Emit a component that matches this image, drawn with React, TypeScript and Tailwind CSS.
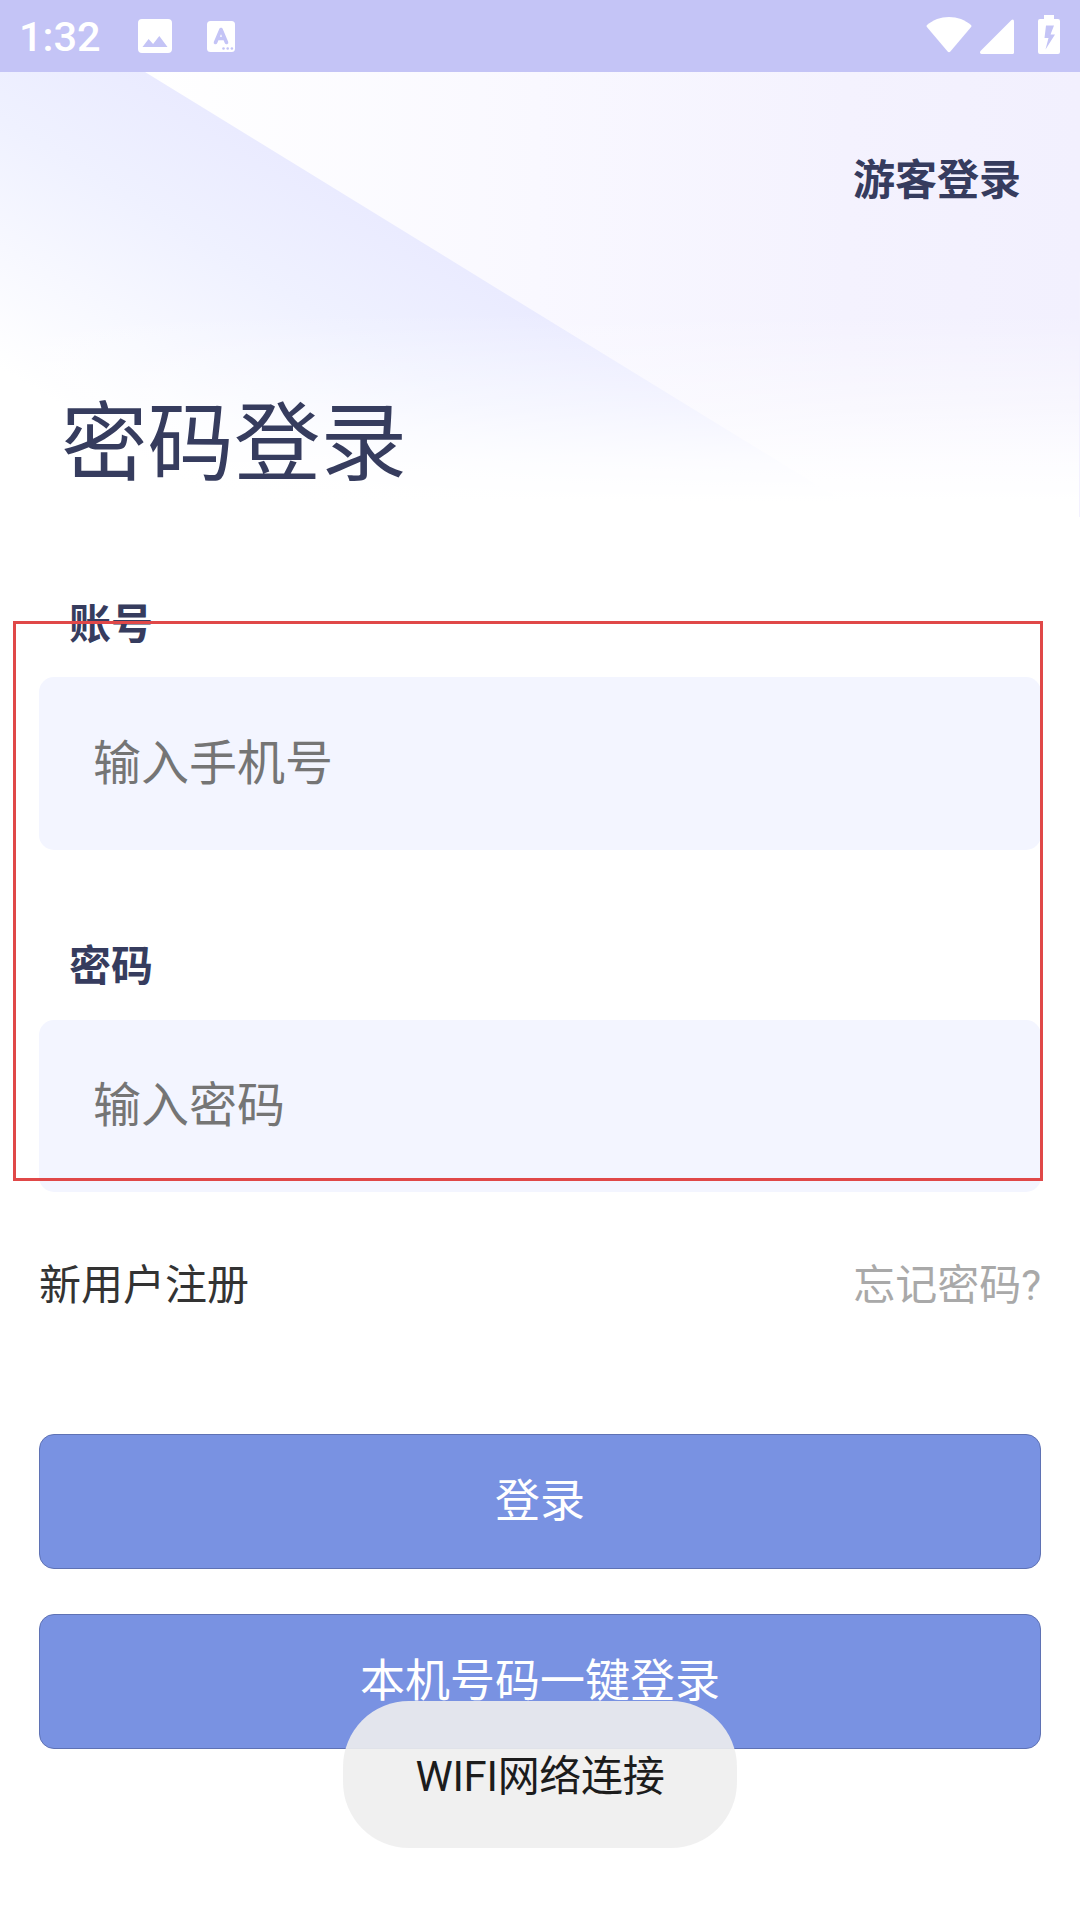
import React from 'react';

interface FieldProps {
  label: string;
  placeholder: string;
  type: string;
  className: string;
  inputClassName: string;
}

function StatusBar() {
  return (
    <div className="relative flex h-[72px] justify-between bg-[#c4c4f6] pl-[19px] pr-5 text-white">
      <div className="flex items-center">
        <span className="w-[119px] pt-[2px] text-[41.5px] font-medium leading-[42px]">1:32</span>
        <svg width="34" height="34" viewBox="0 0 34 34" className="mr-[35px]">
          <path
            fill="currentColor"
            fillRule="evenodd"
            d="M4 0h26a4 4 0 0 1 4 4v26a4 4 0 0 1-4 4H4a4 4 0 0 1-4-4V4a4 4 0 0 1 4-4zM4.500 28H29.500L21.300 17L15.100 25L10.600 20z"
          />
        </svg>
        <svg width="28" height="31" viewBox="0 0 28 31">
          <rect width="28" height="31" rx="3.500" fill="currentColor" />
          <path
            d="M8.500 21.500L14 8.500L19.500 21.500M10.300 17.500H17.700"
            fill="none"
            stroke="#c4c4f6"
            strokeWidth="3.600"
            strokeLinecap="round"
            strokeLinejoin="round"
          />
          <g fill="#c4c4f6">
            <circle cx="16.500" cy="27.500" r="1.300" />
            <circle cx="20.700" cy="27.500" r="1.300" />
            <circle cx="24.900" cy="27.500" r="1.300" />
          </g>
        </svg>
      </div>
      <div className="flex items-start">
        <svg width="46" height="36" viewBox="0 0 47 37" preserveAspectRatio="none" className="mr-2 mt-[17px]">
          <path
            fill="currentColor"
            d="M1 8.300C7 3 15 0 23.500 0S40 3 46 8.300Q47 9.300 46.100 10.400L24.900 35.500Q23.500 37 22.100 35.500L.9 10.400Q0 9.300 1 8.300z"
          />
        </svg>
        <svg width="34" height="35" viewBox="0 0 34 35" className="mr-6 mt-[19px]">
          <path fill="currentColor" d="M31.500 .9Q34 -.1 34 2.500V33.500a1.500 1.500 0 0 1-1.500 1.500H1.500Q-.8 34.500 .5 32z" />
        </svg>
        <svg width="22" height="39" viewBox="0 0 22 39" className="mt-[15px]">
          <path
            fill="currentColor"
            fillRule="evenodd"
            d="M6 0h10v4h4a2 2 0 0 1 2 2v31a2 2 0 0 1-2 2H2a2 2 0 0 1-2-2V6a2 2 0 0 1 2-2h4zM8 10.500L6.500 23H10.500L7.500 34.500L17 19.500H12.500L16 10.500z"
          />
        </svg>
      </div>
    </div>
  );
}

// Pale diagonal beam behind the header, faded out towards the form
function Backdrop() {
  return (
    <svg className="absolute left-0 top-[72px]" width="1080" height="450" viewBox="0 0 1080 450">
      <defs>
        <linearGradient id="sky" x1="145" y1="0" x2="1080" y2="0" gradientUnits="userSpaceOnUse">
          <stop offset="0" stopColor="#ffffff" />
          <stop offset="0.42" stopColor="#f9f8ff" />
          <stop offset="0.75" stopColor="#f4f2fe" />
          <stop offset="1" stopColor="#f2f0fe" />
        </linearGradient>
        <linearGradient id="beam" x1="300" y1="95" x2="128" y2="375" gradientUnits="userSpaceOnUse">
          <stop offset="0" stopColor="#eaebff" />
          <stop offset="0.35" stopColor="#eff1ff" />
          <stop offset="0.68" stopColor="#f7f8ff" />
          <stop offset="1" stopColor="#ffffff" />
        </linearGradient>
        <linearGradient id="fade" x1="0" y1="240" x2="0" y2="430" gradientUnits="userSpaceOnUse">
          <stop offset="0" stopColor="#ffffff" stopOpacity="0" />
          <stop offset="0.53" stopColor="#ffffff" stopOpacity="0.5" />
          <stop offset="0.8" stopColor="#ffffff" stopOpacity="0.85" />
          <stop offset="1" stopColor="#ffffff" />
        </linearGradient>
      </defs>
      <rect width="1080" height="450" fill="url(#sky)" />
      <path d="M0 0H145L877 450H0z" fill="url(#beam)" />
      <rect y="200" width="1080" height="250" fill="url(#fade)" />
      <rect x="1079" y="200" width="1" height="245" fill="#f3f1fe" />
    </svg>
  );
}

function Field({ label, placeholder, type, className, inputClassName }: FieldProps) {
  return (
    <label className={className}>
      <span className="block pl-[30px] text-[42px] font-bold leading-[42px] text-[#363c5e]">{label}</span>
      <input
        type={type}
        placeholder={placeholder}
        className={`block w-full rounded-[15px] bg-[#f3f5ff] px-[54px] text-[48px] placeholder:text-[#757575] ${inputClassName}`}
      />
    </label>
  );
}

export default function App() {
  return (
    <div className="relative h-[1920px] w-[1080px] overflow-hidden bg-white font-['Roboto','Noto_Sans_CJK_SC',sans-serif]">
      <Backdrop />
      <StatusBar />

      <main className="relative flex flex-col px-[39px]">
        <a className="mr-5 mt-[88px] self-end text-[42px] font-bold leading-[42px] text-[#363c5e]">游客登录</a>
        <h1 className="ml-[22px] mt-[199px] text-[86.5px] leading-[88px] text-[#363c5e]">密码登录</h1>

        <Field
          label="账号"
          placeholder="输入手机号"
          type="text"
          className="mt-[115px]"
          inputClassName="mt-[31px] h-[173px]"
        />
        <Field
          label="密码"
          placeholder="输入密码"
          type="password"
          className="mt-24"
          inputClassName="mt-8 h-[172px] pb-[2px]"
        />

        <div className="mt-[73px] flex justify-between text-[42px] leading-[42px]">
          <a className="text-[#333333]">新用户注册</a>
          <a className="text-[#a9a9a9]">忘记密码?</a>
        </div>

        <button className="mt-[127px] h-[135px] rounded-[15px] border border-[#5f72b4] bg-[#7992e2] text-[45px] text-white">
          登录
        </button>
        <button className="mt-[45px] h-[135px] rounded-[15px] border border-[#5f72b4] bg-[#7992e2] text-[45px] text-white">
          本机号码一键登录
        </button>
      </main>

      {/* marker around the credentials */}
      <div className="absolute left-[13px] top-[621px] h-[560px] w-[1030px] border-[3px] border-[#e04848]" />

      {/* toast */}
      <div className="absolute left-[343px] top-[1701px] flex h-[147px] w-[394px] items-center justify-center rounded-[66px] bg-[#eeeeee]/90 pt-[5px] text-[42px] leading-[42px] tracking-[-0.3px] text-[#1c1c1c]">
        WIFI网络连接
      </div>
    </div>
  );
}
